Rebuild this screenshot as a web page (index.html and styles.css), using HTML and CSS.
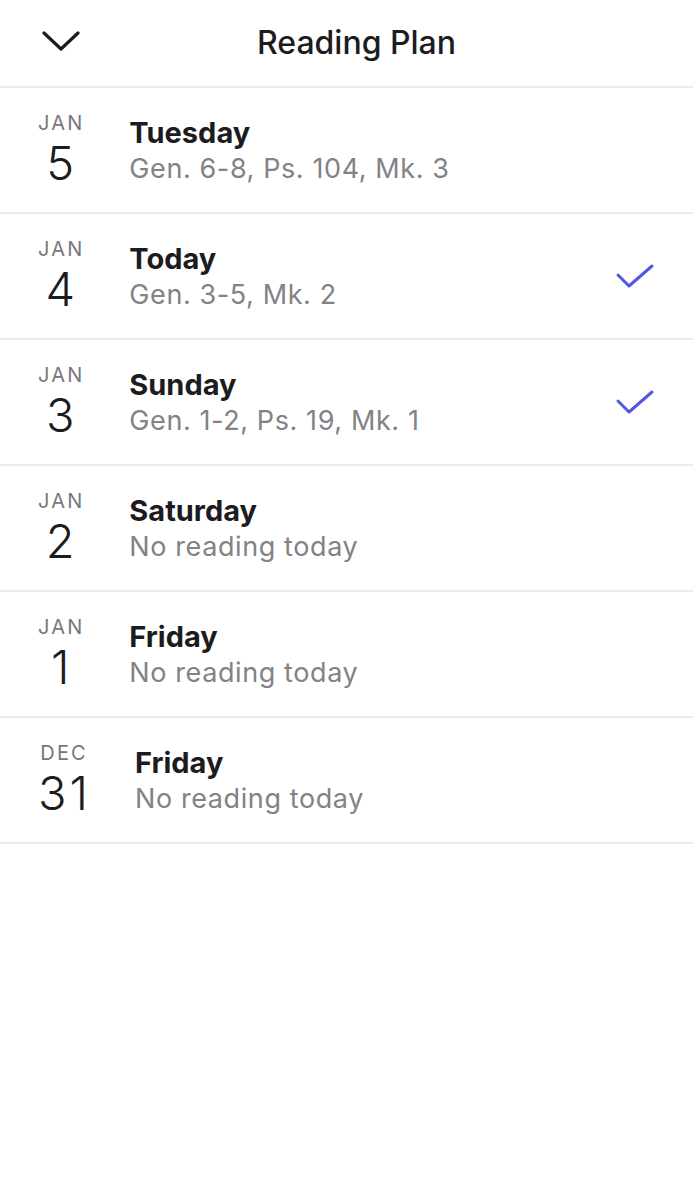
FILE: index.html
```html
<!DOCTYPE html>
<html lang="en">

<head>
    <meta charset="UTF-8">
    <meta name="viewport" content="width=device-width, initial-scale=1.0">
    <title>Reading Plan</title>
    <link rel="stylesheet" href="styles.css">
</head>

<body>
    <div class="header">
        <div class="back">
            <svg width="38" height="22" viewBox="0 0 38 22">
                <path d="M2 3 L19 19 L36 3" fill="none" stroke="#1c1c1e" stroke-width="3.2" stroke-linecap="round" stroke-linejoin="round" />
            </svg>
        </div>
        <div class="title">Reading Plan</div>
    </div>

    <div class="list">
        <div class="row">
            <div class="date"><div class="month">JAN</div><div class="day">5</div></div>
            <div class="info"><div class="name">Tuesday</div><div class="text">Gen. 6-8, Ps. 104, Mk. 3</div></div>
        </div>
        <div class="row">
            <div class="date"><div class="month">JAN</div><div class="day">4</div></div>
            <div class="info"><div class="name">Today</div><div class="text">Gen. 3-5, Mk. 2</div></div>
            <div class="check">
                <svg width="40" height="28" viewBox="0 0 40 28">
                    <path d="M3 12 L14 23 L37 3" fill="none" stroke="#5458e0" stroke-width="3" stroke-linecap="round" stroke-linejoin="round" />
                </svg>
            </div>
        </div>
        <div class="row">
            <div class="date"><div class="month">JAN</div><div class="day">3</div></div>
            <div class="info"><div class="name">Sunday</div><div class="text">Gen. 1-2, Ps. 19, Mk. 1</div></div>
            <div class="check">
                <svg width="40" height="28" viewBox="0 0 40 28">
                    <path d="M3 12 L14 23 L37 3" fill="none" stroke="#5458e0" stroke-width="3" stroke-linecap="round" stroke-linejoin="round" />
                </svg>
            </div>
        </div>
        <div class="row">
            <div class="date"><div class="month">JAN</div><div class="day">2</div></div>
            <div class="info"><div class="name">Saturday</div><div class="text">No reading today</div></div>
        </div>
        <div class="row">
            <div class="date"><div class="month">JAN</div><div class="day">1</div></div>
            <div class="info"><div class="name">Friday</div><div class="text">No reading today</div></div>
        </div>
        <div class="row">
            <div class="date"><div class="month">DEC</div><div class="day">31</div></div>
            <div class="info"><div class="name">Friday</div><div class="text">No reading today</div></div>
        </div>
    </div>
</body>

</html>
```

FILE: styles.css
```css
body {
    margin: 0;
    background-color: #ffffff;
    font-family: Inter, "Noto Sans", sans-serif;
    color: #1c1c1e;
}

.header {
    display: flex;
    align-items: center;
    height: 86px;
    border-bottom: 2px solid #ebebef;
}

.back {
    width: 120px;
    padding-left: 42px;
    box-sizing: border-box;
    display: flex;
    padding-bottom: 4px;
}

.title {
    flex: 1;
    text-align: center;
    font-size: 32px;
    font-weight: 500;
    padding-right: 100px;
    padding-bottom: 2px;
}

.row {
    display: flex;
    align-items: center;
    height: 124px;
    padding-left: 38px;
    padding-right: 38px;
    border-bottom: 2px solid #ebebef;
}

.date {
    display: flex;
    flex-direction: column;
    align-items: center;
    margin-right: 47px;
    padding-bottom: 5px;
}

.month {
    font-size: 20px;
    letter-spacing: 2.2px;
    margin-right: -2.2px;
    color: #77777c;
    line-height: 22px;
}

.day {
    font-size: 47px;
    font-weight: 300;
    line-height: 42px;
    margin-top: 8px;
    letter-spacing: 3px;
    margin-right: -3px;
}

.info {
    flex: 1;
}

.name {
    font-size: 29px;
    font-weight: 700;
    line-height: 33px;
}

.text {
    font-size: 27px;
    letter-spacing: 0.6px;
    color: #828287;
    line-height: 33px;
    margin-top: 3px;
}

.check {
    display: flex;
    padding-top: 2px;
}
```
